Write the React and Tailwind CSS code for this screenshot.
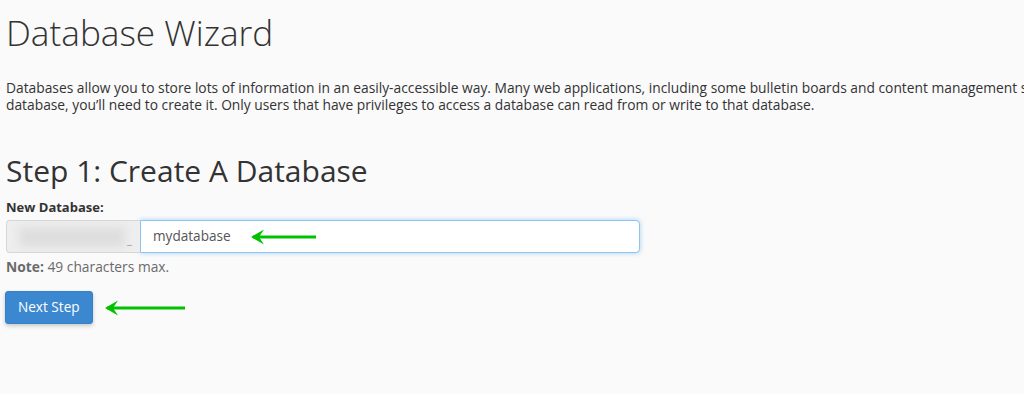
import React from 'react';

const Arrow = ({ width }) => (
  <svg width={width} height="18" viewBox={`0 0 ${width} 18`} className="block">
    <line x1="3" y1="9" x2={width} y2="9" stroke="#00c200" strokeWidth="3" />
    <path d="M1 9 L14 1.5 L9 9 L14 16.5 Z" fill="#00c200" />
  </svg>
);

export default function App() {
  return (
    <div className="min-h-[394px] overflow-hidden bg-[#fafafa] text-[#333] px-[6px] pt-[12px] font-['Open_Sans',sans-serif]">
      <h1 className="text-[35.2px] leading-[40px] font-light">Database Wizard</h1>
      <p className="mt-[27px] text-[13.8px] leading-[17px] whitespace-nowrap">
        Databases allow you to store lots of information in an easily-accessible way. Many web applications, including some bulletin boards and content management systems, use databases. To use a
        <br />
        database, you’ll need to create it. Only users that have privileges to access a database can read from or write to that database.
      </p>
      <h2 className="mt-[42px] text-[30px] leading-[32px] font-medium">Step 1: Create A Database</h2>
      <label className="block mt-[12px] text-[13px] leading-[16px] font-bold">New Database:</label>
      <div className="mt-[5px] flex h-[33px] w-[634px]">
        <div className="relative w-[134px] shrink-0 bg-[#eeeeee] border border-[#d6d6d6] border-r-0 rounded-l-[4px] overflow-hidden">
          <div className="absolute left-[12px] top-[6px] w-[106px] h-[20px] bg-[#dedede] blur-[4px]" />
          <span className="absolute left-[120px] top-[13px] text-[11px] leading-[12px] text-[#999]">_</span>
        </div>
        <div className="flex-1 flex items-center bg-white border border-[#8cc4f2] rounded-r-[4px] shadow-[0_0_5px_rgba(102,175,233,0.55)] pl-[12px]">
          <span className="text-[13.6px] text-[#555]">mydatabase</span>
          <span className="ml-[19px]"><Arrow width={66} /></span>
        </div>
      </div>
      <p className="mt-[6px] text-[13.8px] leading-[16px] text-[#6a6a6a]">
        <span className="font-bold">Note:</span> 49 characters max.
      </p>
      <div className="mt-[16px] flex items-center">
        <button className="-ml-px h-[33px] px-[12px] bg-[#3b88d0] text-white text-[13.6px] rounded-[3px] border border-[#3580c6] shadow-[0_2px_4px_rgba(0,0,0,0.2)]">
          Next Step
        </button>
        <span className="ml-[11px]"><Arrow width={81} /></span>
      </div>
    </div>
  );
}
